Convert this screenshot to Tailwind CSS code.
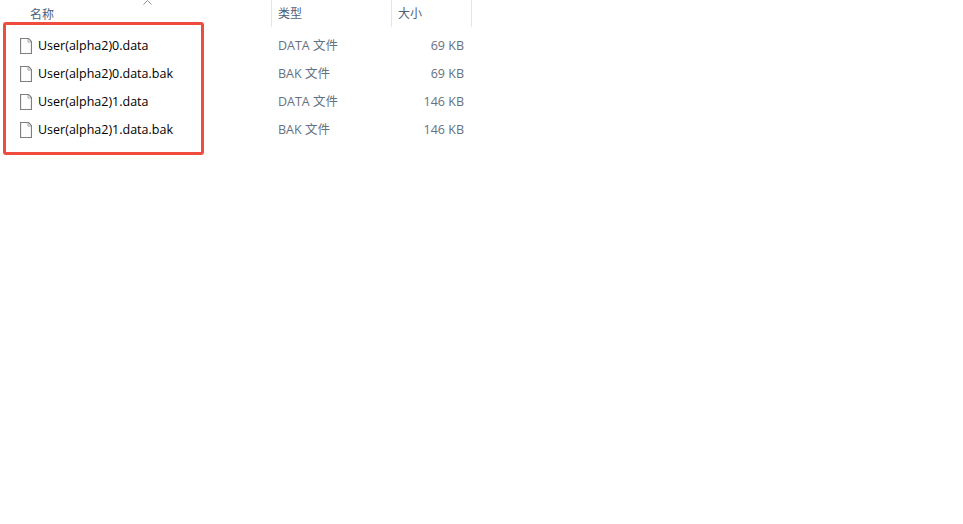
<!DOCTYPE html>
<html lang="zh">
<head>
    <meta charset="UTF-8">
    <title>文件列表</title>
    <script src="https://cdn.jsdelivr.net/npm/@tailwindcss/browser@4"></script>
</head>
<body class="bg-white w-[963px] h-[524px] overflow-hidden font-['Open_Sans','Noto_Sans_CJK_SC',sans-serif] text-[12.5px] relative">
    <!-- Sort arrow -->
    <svg class="absolute left-[143px] top-0" width="9" height="5" viewBox="0 0 9 5" fill="none"><path d="M0.5 4.5L4.5 0.5L8.5 4.5" stroke="#8a8f96"/></svg>

    <!-- Header -->
    <div class="grid grid-cols-[272px_120px_80px] w-[472px] h-[27px] text-[12px] text-[#4c607a]">
        <div class="pl-[30px] pt-[6px] border-r border-[#e5e5e5]">名称</div>
        <div class="pl-[6px] pt-[5px] border-r border-[#e5e5e5]">类型</div>
        <div class="pl-[6px] pt-[5px] border-r border-[#e5e5e5]">大小</div>
    </div>

    <!-- Rows -->
    <div class="w-[472px] pt-[5px]">
        <div class="grid grid-cols-[272px_120px_72px] h-[28px] items-center">
            <div class="flex items-center pl-[20px] gap-[6px] text-black">
                <svg width="12" height="16" viewBox="0 0 12 16" fill="none"><path d="M0.5 0.5H8.5L11.5 3.5V15.5H0.5Z" fill="#fdfdfd" stroke="#7f7f7f" stroke-width="1.2"/><path d="M8 1V4H11" stroke="#a8a8a8"/></svg>
                <span>User(alpha2)0.data</span>
            </div>
            <div class="pl-[6px] text-[#667180]">DATA 文件</div>
            <div class="text-right text-[#667180]">69 KB</div>
        </div>
        <div class="grid grid-cols-[272px_120px_72px] h-[28px] items-center">
            <div class="flex items-center pl-[20px] gap-[6px] text-black">
                <svg width="12" height="16" viewBox="0 0 12 16" fill="none"><path d="M0.5 0.5H8.5L11.5 3.5V15.5H0.5Z" fill="#fdfdfd" stroke="#7f7f7f" stroke-width="1.2"/><path d="M8 1V4H11" stroke="#a8a8a8"/></svg>
                <span>User(alpha2)0.data.bak</span>
            </div>
            <div class="pl-[6px] text-[#667180]">BAK 文件</div>
            <div class="text-right text-[#667180]">69 KB</div>
        </div>
        <div class="grid grid-cols-[272px_120px_72px] h-[28px] items-center">
            <div class="flex items-center pl-[20px] gap-[6px] text-black">
                <svg width="12" height="16" viewBox="0 0 12 16" fill="none"><path d="M0.5 0.5H8.5L11.5 3.5V15.5H0.5Z" fill="#fdfdfd" stroke="#7f7f7f" stroke-width="1.2"/><path d="M8 1V4H11" stroke="#a8a8a8"/></svg>
                <span>User(alpha2)1.data</span>
            </div>
            <div class="pl-[6px] text-[#667180]">DATA 文件</div>
            <div class="text-right text-[#667180]">146 KB</div>
        </div>
        <div class="grid grid-cols-[272px_120px_72px] h-[28px] items-center">
            <div class="flex items-center pl-[20px] gap-[6px] text-black">
                <svg width="12" height="16" viewBox="0 0 12 16" fill="none"><path d="M0.5 0.5H8.5L11.5 3.5V15.5H0.5Z" fill="#fdfdfd" stroke="#7f7f7f" stroke-width="1.2"/><path d="M8 1V4H11" stroke="#a8a8a8"/></svg>
                <span>User(alpha2)1.data.bak</span>
            </div>
            <div class="pl-[6px] text-[#667180]">BAK 文件</div>
            <div class="text-right text-[#667180]">146 KB</div>
        </div>
    </div>

    <!-- Red highlight box -->
    <div class="absolute left-[3px] top-[22px] w-[201px] h-[133px] border-[3px] border-[#f04c3e] rounded-[3px]"></div>
</body>
</html>
